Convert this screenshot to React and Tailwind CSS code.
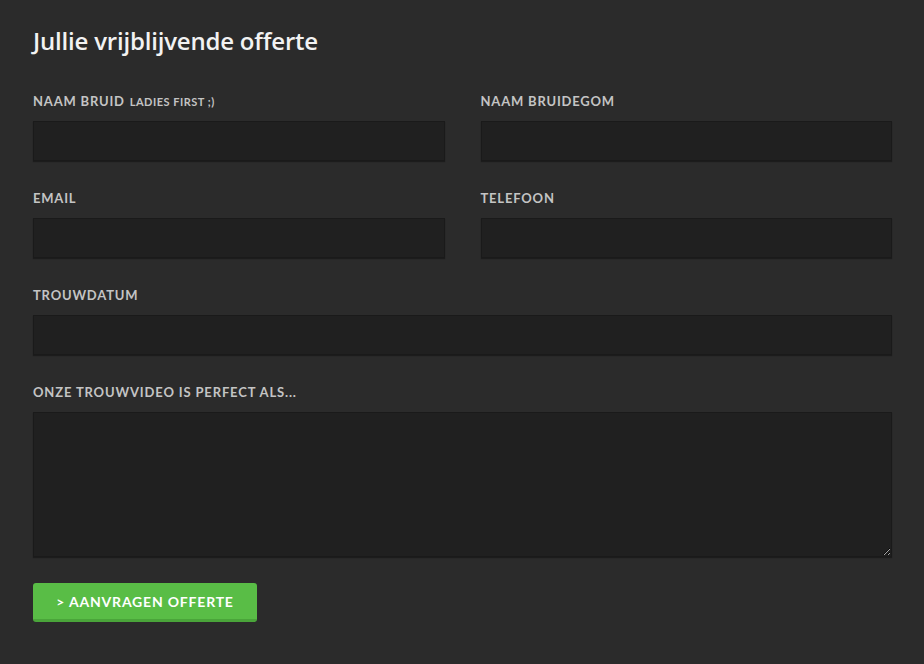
import React from 'react';

function Field({ label, extra, className = '' }) {
  return (
    <div className={`flex flex-col ${className}`}>
      <label className="flex items-baseline h-4 text-[13px] leading-4 font-bold uppercase tracking-[0.8px] text-[#c4c4c4] mb-3">
        {label}
        {extra && <span className="ml-[5px] text-[11px] leading-4 font-bold tracking-[0.5px]">{extra}</span>}
      </label>
      <input
        type="text"
        className="h-10 bg-[#202020] border border-[#1a1a1a] shadow-[0_1px_1px_rgba(0,0,0,0.35)] outline-none px-3 text-[#ddd] text-sm"
      />
    </div>
  );
}

export default function App() {
  return (
    <div
      className="min-h-screen w-full bg-[#2b2b2b] pl-[33px] pr-[32px] pt-[27px] pb-10"
      style={{ fontFamily: 'Lato, "Open Sans", sans-serif' }}
    >
      <h2 className="text-[24px] leading-7 font-semibold text-[#f2f2f2] tracking-[-0.2px] mb-[38px]" style={{ fontFamily: '"Open Sans", Lato, sans-serif' }}>
        Jullie vrijblijvende offerte
      </h2>

      <form className="flex flex-col gap-[29px]" onSubmit={(e) => e.preventDefault()}>
        <div className="grid grid-cols-2 gap-x-9">
          <Field label="Naam bruid" extra="Ladies first ;)" />
          <Field label="Naam bruidegom" />
        </div>
        <div className="grid grid-cols-2 gap-x-9">
          <Field label="Email" />
          <Field label="Telefoon" />
        </div>
        <Field label="Trouwdatum" />
        <div className="flex flex-col">
          <label className="h-4 text-[13px] leading-4 font-bold uppercase tracking-[0.85px] text-[#c4c4c4] mb-3">
            Onze trouwvideo is perfect als...
          </label>
          <textarea className="h-[145px] bg-[#202020] border border-[#1a1a1a] shadow-[0_1px_1px_rgba(0,0,0,0.35)] outline-none p-3 text-[#ddd] text-sm" />
        </div>
        <div className="-mt-[3px]">
          <button
            type="submit"
            className="w-[224px] h-[39px] bg-[#59bd46] border-b-[3px] border-[#4aa53a] rounded-[3px] text-white text-[14px] font-bold uppercase tracking-[0.8px]"
          >
            &gt; Aanvragen offerte
          </button>
        </div>
      </form>
    </div>
  );
}
